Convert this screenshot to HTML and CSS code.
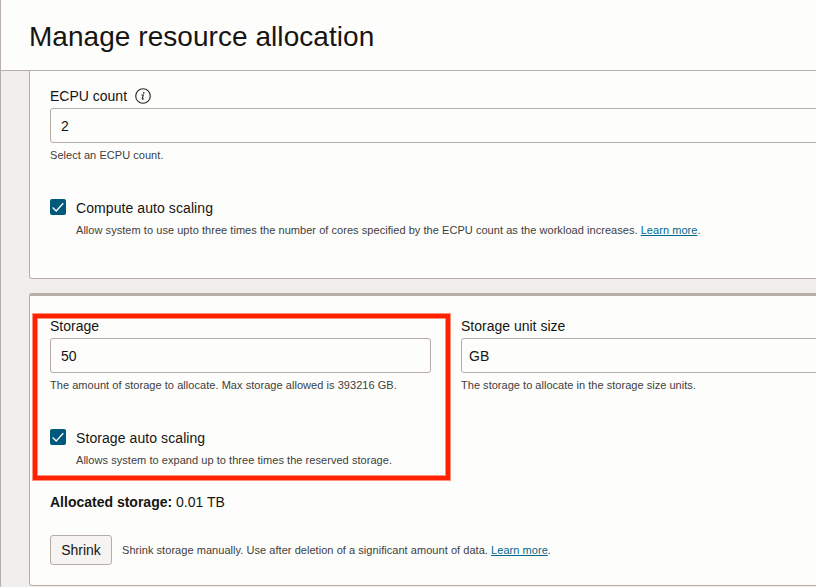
FILE: index.html
```html
<!DOCTYPE html>
<html lang="en">
<head>
<meta charset="utf-8">
<title>Manage resource allocation</title>
<link rel="stylesheet" href="styles.css">
</head>
<body>
<main class="panel">
  <header class="panel-header"><h1>Manage resource allocation</h1></header>
  <div class="panel-body">
    <section class="card card-compute">
      <div class="label">ECPU count
        <svg class="info" viewBox="0 0 16 16" aria-hidden="true"><circle cx="8" cy="8" r="7.3" fill="none" stroke="#292725" stroke-width="1.1"/><circle cx="8.8" cy="4.8" r=".85" fill="#292725"/><path d="M6.5 7H8.3L7.3 10.7Q7.1 11.5 8.8 10.8" fill="none" stroke="#292725" stroke-width="1.1"/></svg>
      </div>
      <div class="input input-wide">2</div>
      <p class="help">Select an ECPU count.</p>
      <div class="check-row">
        <svg class="checkbox" viewBox="0 0 16 16"><rect width="16" height="16" rx="2" fill="#00587d"/><path d="M2.6 8.5L6.2 12L13.3 4.2" fill="none" stroke="#fff" stroke-width="1.3"/></svg>
        <div><div class="label">Compute auto scaling</div>
        <p class="help">Allow system to use upto three times the number of cores specified by the ECPU count as the workload increases. <a href="#">Learn more</a>.</p></div>
      </div>
    </section>
    <section class="card card-storage">
      <div class="fields">
        <div class="field">
          <div class="label">Storage</div>
          <div class="input">50</div>
          <p class="help">The amount of storage to allocate. Max storage allowed is 393216 GB.</p>
        </div>
        <div class="field">
          <div class="label">Storage unit size</div>
          <div class="input input-select">GB</div>
          <p class="help help-unit">The storage to allocate in the storage size units.</p>
        </div>
      </div>
      <div class="check-row">
        <svg class="checkbox" viewBox="0 0 16 16"><rect width="16" height="16" rx="2" fill="#00587d"/><path d="M2.6 8.5L6.2 12L13.3 4.2" fill="none" stroke="#fff" stroke-width="1.3"/></svg>
        <div><div class="label">Storage auto scaling</div>
        <p class="help">Allows system to expand up to three times the reserved storage.</p></div>
      </div>
      <p class="allocated"><strong>Allocated storage:</strong> 0.01 TB</p>
      <div class="shrink-row">
        <button type="button">Shrink</button>
        <p class="help">Shrink storage manually. Use after deletion of a significant amount of data. <a href="#">Learn more</a>.</p>
      </div>
      <div class="highlight"></div>
    </section>
  </div>
</main>
</body>
</html>
```
FILE: styles.css
```css
* { box-sizing: border-box; }
body {
  margin: 0;
  overflow: hidden;
  background: #f1efed;
  color: #161513;
  font: 14px/20px "Liberation Sans", Arial, sans-serif;
}
h1, p { margin: 0; }
.panel { height: 587px; overflow: hidden; border-left: 1px solid #b9afa9; }
.panel-header {
  height: 71px;
  padding: 20px 0 0 28px;
  background: #fdfdfb;
  border-bottom: 1px solid #b7aea7;
}
h1 { font-size: 28px; line-height: 34px; font-weight: 400; letter-spacing: .05px; white-space: nowrap; }
.panel-body { padding-left: 28px; }
.card {
  position: relative;
  width: 820px;
  padding-left: 20px;
  background: #fdfdfb;
  border: 1px solid #b7aea7;
}
.card-compute {
  height: 208px;
  padding-top: 15px;
  border-top: 0;
  border-radius: 0 0 3px 3px;
}
.card-storage {
  height: 293px;
  margin-top: 14px;
  padding-top: 20px;
  border-top-width: 3px;
  border-radius: 3px;
}
.label { display: flex; align-items: center; height: 20px; white-space: nowrap; }
.info { width: 16px; height: 16px; margin-left: 8px; }
.input {
  height: 35px;
  margin-top: 2px;
  padding: 7px 10px;
  border: 1px solid #b5aca5;
  border-radius: 3px;
}
.input-select { padding-left: 7px; }
.help { color: #403e3b; font-size: 11px; line-height: 16px; letter-spacing: .047px; white-space: nowrap; }
.help-unit { letter-spacing: .025px; }
.input + .help { margin-top: 4px; }
a { color: #00688c; }
.check-row { display: flex; gap: 10px; margin-top: 35px; }
.check-row .label { letter-spacing: .08px; }
.check-row .help { margin-top: 4px; }
.checkbox { flex: none; width: 16px; height: 16px; margin-top: 1px; }
.fields { display: grid; grid-template-columns: 381px 381px; gap: 30px; }
.allocated { margin-top: 24px; }
.shrink-row { display: flex; align-items: center; gap: 10px; margin-top: 23px; }
button {
  width: 62px;
  height: 30px;
  padding: 0;
  border: 1px solid #b5aca5;
  border-radius: 3px;
  background: #f5f4f2;
  color: #161513;
  font: inherit;
}
.highlight {
  position: absolute;
  left: 3px;
  top: 18px;
  width: 417px;
  height: 166px;
  border: 4px solid #ff2200;
  box-shadow: 0 0 0 1px #ff220080, inset 0 0 0 1px #ff220080;
}
```
